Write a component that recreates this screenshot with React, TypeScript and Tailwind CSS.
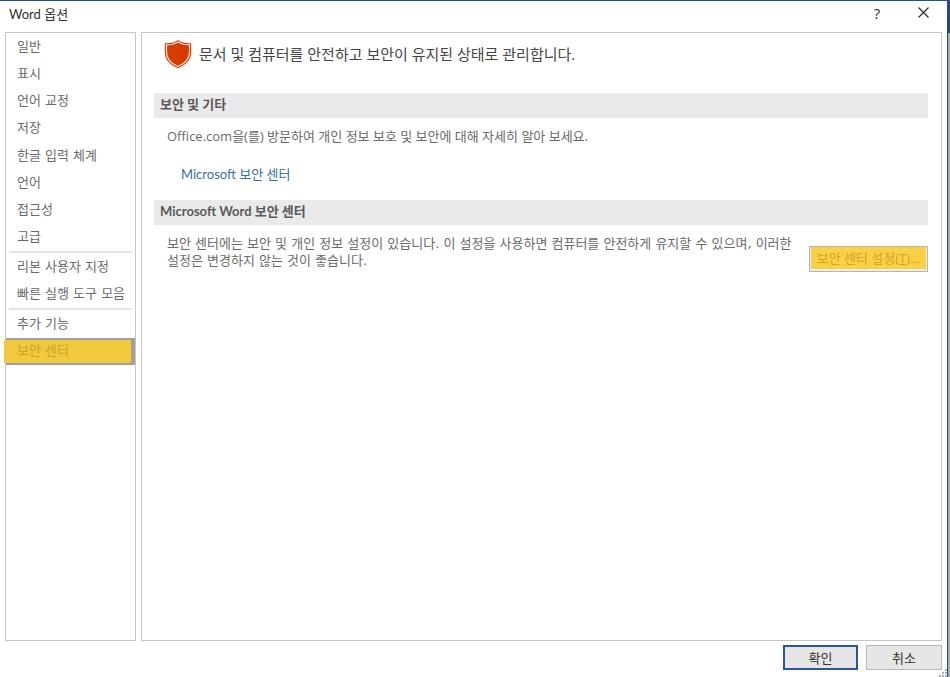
import { useState } from 'react'
import clsx from 'clsx'

const categoryGroups = [
  {
    className: 'h-[218px]',
    items: ['일반', '표시', '언어 교정', '저장', '한글 입력 체계', '언어', '접근성', '고급'],
  },
  { className: 'h-[55px]', items: ['리본 사용자 지정', '빠른 실행 도구 모음'] },
  { className: 'h-[55px]', items: ['추가 기능', '보안 센터'] },
]

function ShieldIcon() {
  return (
    <svg width="28" height="30" viewBox="0 0 28 30" aria-hidden="true">
      <path
        d="M14 1C10.5 3.6 6 4.6 0.8 4.2V13C0.8 20.4 5.5 25.8 14 29.2C22.5 25.8 27.2 20.4 27.2 13V4.2C22 4.6 17.5 3.6 14 1Z"
        fill="#d83b01"
      />
      <path
        d="M14 2.9C10.6 5 6.8 5.9 2.5 5.7V13C2.5 19.4 6.4 24.4 14 27.5C21.6 24.4 25.5 19.4 25.5 13V5.7C21.2 5.9 17.4 5 14 2.9Z"
        fill="none"
        stroke="#fbe3da"
        strokeWidth="1.2"
      />
    </svg>
  )
}

function ResizeGrip() {
  return (
    <svg width="8" height="8" viewBox="0 0 8 8" fill="#b0b0b0" aria-hidden="true">
      <path d="M6 0h2v2H6zM3 3h2v2H3zM6 3h2v2H6zM0 6h2v2H0zM3 6h2v2H3zM6 6h2v2H6z" />
    </svg>
  )
}

function TitleBar() {
  return (
    <header className="flex h-[31px] items-center justify-between pl-[9px] pr-4">
      <h1 className="pb-[6px] font-['Lato','Noto_Sans_CJK_KR',sans-serif] text-[13px] leading-5 text-[#303030]">
        Word 옵션
      </h1>
      <div className="flex items-center gap-[30px] pb-2">
        <button
          type="button"
          aria-label="도움말"
          className="flex h-5 w-4 items-center justify-center text-[15px] leading-5 text-[#303030]"
        >
          ?
        </button>
        <button type="button" aria-label="닫기" className="flex h-5 w-4 items-center justify-center">
          <svg width="11" height="11" viewBox="0 0 11 11" stroke="#303030" strokeWidth="1.3" aria-hidden="true">
            <path d="M0.5 0.5L10.5 10.5M10.5 0.5L0.5 10.5" />
          </svg>
        </button>
      </div>
    </header>
  )
}

interface SidebarProps {
  selected: string
  onSelect: (name: string) => void
}

function Sidebar({ selected, onSelect }: SidebarProps) {
  return (
    <nav className="w-[131px] shrink-0 border border-[#c6c6c6] font-['DejaVu_Sans','Noto_Sans_CJK_KR',sans-serif]">
      {categoryGroups.map((group, index) => (
        <div key={group.items[0]}>
          {index > 0 && <hr className="mx-[3px] border-0 border-t-2 border-[#e4e4e4]" />}
          <ul className={clsx('grid auto-rows-fr', group.className)}>
            {group.items.map((name) => (
              <li key={name} className="relative flex">
                <button
                  type="button"
                  onClick={() => onSelect(name)}
                  className={clsx(
                    'w-full whitespace-nowrap pl-[11px] text-left text-[13px] leading-5',
                    name === selected
                      ? 'border-y-2 border-r-4 border-[#a0a0a0] bg-[#f0c93c] text-[#cda52b]'
                      : 'text-[#6a6a6a]'
                  )}
                >
                  {name}
                </button>
                {name === selected && (
                  <span className="absolute inset-y-[2px] -left-[2px] w-[3px] bg-[#f0c93c]" />
                )}
              </li>
            ))}
          </ul>
        </div>
      ))}
    </nav>
  )
}

function SectionHeading({ children }: { children: string }) {
  return (
    <h2 className="h-[25px] bg-[#eaeaea] pl-[6px] font-['Lato','Noto_Sans_CJK_KR',sans-serif] text-[13px] font-bold leading-[23px] text-[#5a5a5a]">
      {children}
    </h2>
  )
}

function TrustCenterPage() {
  return (
    <main className="min-w-0 flex-1 border border-[#c6c6c6] pl-3 pr-[13px] text-[13px] text-[#6a6a6a]">
      <div className="flex h-[60px] items-center gap-[7px] pb-[18px] pl-[10px]">
        <ShieldIcon />
        <p className="text-[15px] leading-5 text-[#444444]">
          문서 및 컴퓨터를 안전하고 보안이 유지된 상태로 관리합니다.
        </p>
      </div>

      <SectionHeading>보안 및 기타</SectionHeading>
      <div className="flex flex-col items-start gap-[18px] pb-4 pl-[13px] pt-2 leading-5">
        <p>Office.com을(를) 방문하여 개인 정보 보호 및 보안에 대해 자세히 알아 보세요.</p>
        <a href="#trust-center" className="ml-[14px] font-['Lato','Noto_Sans_CJK_KR',sans-serif] text-[#3a6ea5]">
          Microsoft 보안 센터
        </a>
      </div>

      <SectionHeading>Microsoft Word 보안 센터</SectionHeading>
      <div className="flex items-start justify-between gap-4 pl-[13px]">
        <p className="max-w-[630px] pt-[10px] font-['DejaVu_Sans','Noto_Sans_CJK_KR',sans-serif] leading-[17px]">
          보안 센터에는 보안 및 개인 정보 설정이 있습니다. 이 설정을 사용하면 컴퓨터를 안전하게 유지할 수 있으며,
          이러한 설정은 변경하지 않는 것이 좋습니다.
        </p>
        <button
          type="button"
          className="mt-[21px] h-[26px] w-[119px] shrink-0 whitespace-nowrap border border-[#b4b4b4] bg-[#eeeeee] px-px pb-[2px] text-[#cfa62a]"
        >
          <span className="flex h-full items-center justify-center bg-[#fad145] pt-[2px]">
            보안 센터 설정(<u>T</u>)...
          </span>
        </button>
      </div>
    </main>
  )
}

export default function App() {
  const [selected, setSelected] = useState('보안 센터')

  return (
    <div className="flex min-h-screen bg-white font-['Open_Sans','Noto_Sans_CJK_KR',sans-serif]">
      <div className="flex min-w-0 flex-1 flex-col border-r border-t border-[#1f4e9e]">
        <TitleBar />
        <div className="flex flex-1 gap-[5px] pl-[5px] pr-[5px]">
          <Sidebar selected={selected} onSelect={setSelected} />
          <TrustCenterPage />
        </div>
        <footer className="relative flex justify-end gap-2 pb-[7px] pr-[5px] pt-1 text-[13px] leading-5 text-[#333333]">
          <button type="button" className="h-[25px] w-[75px] border-2 border-[#2b579a] bg-[#e6e6e6]">
            확인
          </button>
          <button type="button" className="h-[25px] w-[76px] border border-[#b8b8b8] bg-[#e6e6e6]">
            취소
          </button>
          <span className="absolute bottom-0 right-0">
            <ResizeGrip />
          </span>
        </footer>
      </div>
      {/* edge of the window behind the dialog */}
      <div className="flex w-[2px] flex-col">
        <div className="h-[33px] bg-[#24487f]" />
        <div className="flex-1 bg-[#a9acb3]" />
      </div>
    </div>
  )
}
